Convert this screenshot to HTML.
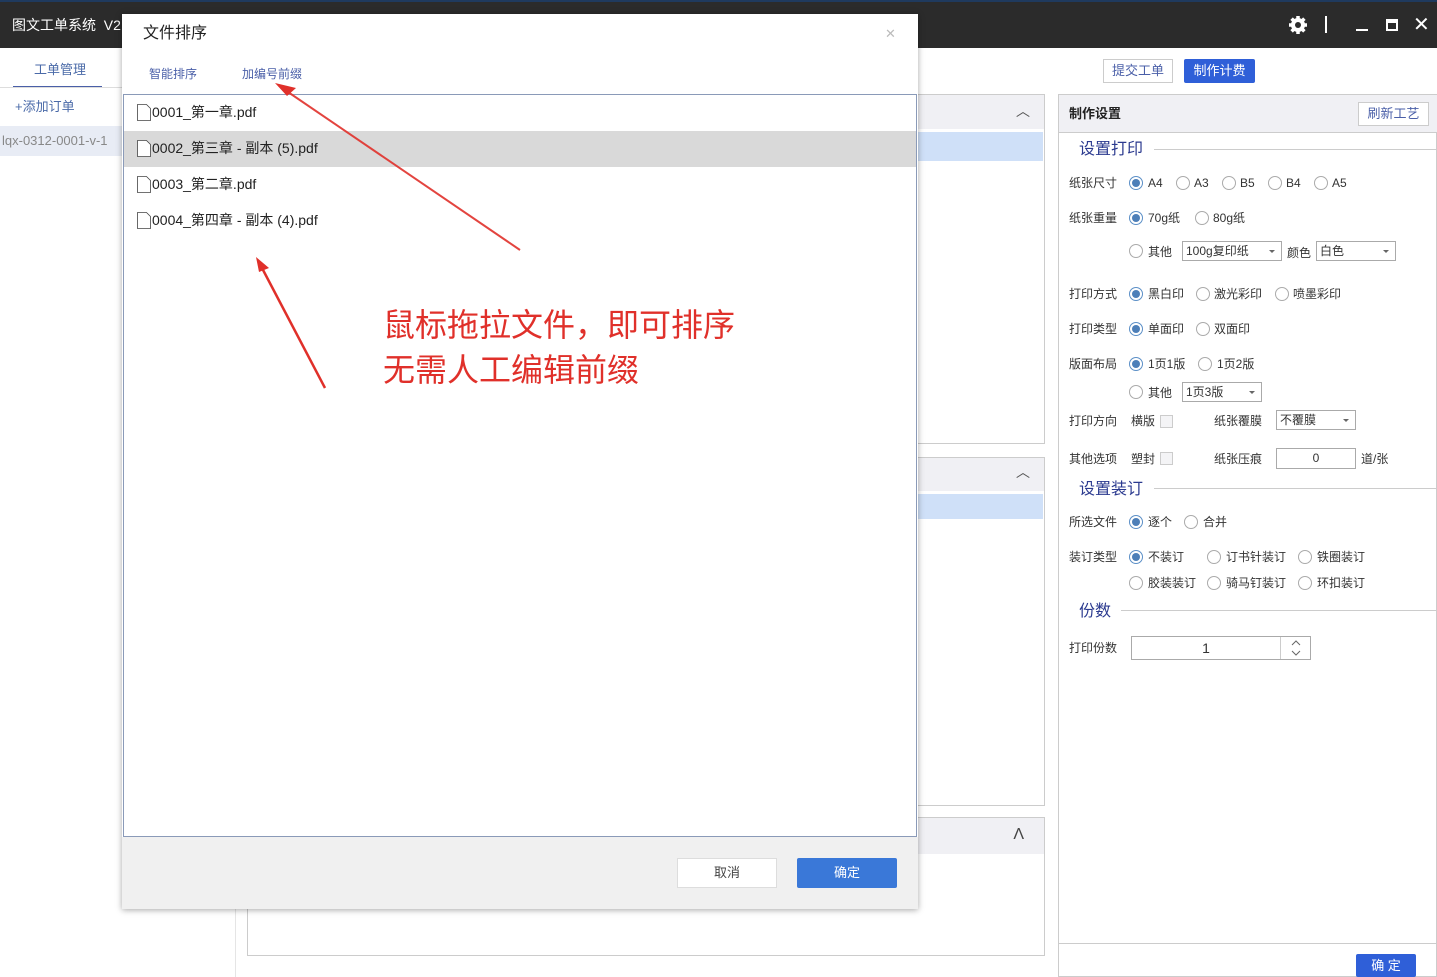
<!DOCTYPE html>
<html><head><meta charset="utf-8"><style>
*{margin:0;padding:0;box-sizing:border-box}
body{width:1437px;height:977px;position:relative;overflow:hidden;background:#fff;font-family:"Liberation Sans","Noto Sans CJK SC",sans-serif;color:#333;font-size:12px}
.a{position:absolute}
.r{position:absolute;width:14px;height:14px;border:1px solid #aaa;border-radius:50%;background:#fff}
.r.on{border-color:#5b8fc7}
.r.on::after{content:"";position:absolute;left:2px;top:2px;width:8px;height:8px;border-radius:50%;background:#4d7fb8}
.t{position:absolute;font-size:12px;line-height:14px;color:#333;white-space:nowrap}
.sel{position:absolute;height:20px;border:1px solid #aaa;background:#fff;font-size:12px;padding-left:3px;line-height:18px}
.sel::after{content:"";position:absolute;right:6px;top:8px;border:3px solid transparent;border-top:3px solid #666}
.cb{position:absolute;width:13px;height:13px;border:1px solid #ccc;background:#f4f4f6}
.sec{position:absolute;font-size:16px;line-height:18px;color:#2b3a8f}
.line{position:absolute;height:1px;background:#ccc}
</style></head><body>
<!-- title bar -->
<div class="a" style="left:0;top:0;width:1437px;height:48px;background:#2b2b2b;border-top:2px solid #1f3a5e"></div>
<div class="t" style="left:12px;top:17px;color:#fff;font-size:14px;line-height:16px">图文工单系统&nbsp; V2</div>
<svg class="a" style="left:1288px;top:15px" width="20" height="20" viewBox="0 0 20 20"><circle cx="10" cy="10" r="7" fill="#fff"/><g stroke="#fff" stroke-width="3.5"><line x1="10" y1="1" x2="10" y2="19"/><line x1="1" y1="10" x2="19" y2="10"/><line x1="3.6" y1="3.6" x2="16.4" y2="16.4"/><line x1="16.4" y1="3.6" x2="3.6" y2="16.4"/></g><circle cx="10" cy="10" r="3" fill="#2b2b2b"/></svg>
<div class="a" style="left:1325px;top:16px;width:2px;height:17px;background:#fff"></div>
<div class="a" style="left:1356px;top:29px;width:12px;height:2px;background:#fff"></div>
<div class="a" style="left:1386px;top:19px;width:12px;height:12px;border:2px solid #fff;border-top-width:4px"></div>
<div class="t" style="left:1413px;top:15px;color:#fff;font-size:20px;line-height:20px">✕</div>
<!-- left sidebar -->
<div class="t" style="left:34px;top:62px;color:#4a6aa8;font-size:13px;line-height:15px">工单管理</div>
<div class="a" style="left:13px;top:86px;width:89px;height:2px;background:#4a5fa8"></div>
<div class="a" style="left:0;top:87px;width:122px;height:1px;background:#ddd"></div>
<div class="t" style="left:15px;top:99px;color:#4a6aa8;font-size:13px;line-height:15px">+添加订单</div>
<div class="a" style="left:0;top:126px;width:122px;height:30px;background:#e8ecf5"></div>
<div class="t" style="left:2px;top:133px;color:#888;font-size:13px;line-height:15px">lqx-0312-0001-v-1</div>
<div class="a" style="left:235px;top:820px;width:1px;height:157px;background:#e5e5e5"></div>
<!-- top buttons -->
<div class="a" style="left:1103px;top:59px;width:70px;height:24px;border:1px solid #ccc;background:#fff;color:#4a5fa8;font-size:13px;text-align:center;line-height:22px">提交工单</div>
<div class="a" style="left:1184px;top:59px;width:71px;height:24px;background:#2f5fd8;color:#fff;font-size:13px;text-align:center;line-height:24px;border-radius:2px">制作计费</div>
<!-- middle panels -->
<div class="a" style="left:900px;top:94px;width:145px;height:350px;border:1px solid #ccc;background:#fff"><div style="height:34px;background:#f0f0f4"></div><div style="position:absolute;left:16px;top:37px;width:126px;height:29px;background:#cfe0f8"></div><div style="position:absolute;right:14px;top:6px;font-size:14px;color:#555">︿</div></div>
<div class="a" style="left:900px;top:457px;width:145px;height:349px;border:1px solid #ccc;background:#fff"><div style="height:33px;background:#f0f0f4"></div><div style="position:absolute;left:16px;top:36px;width:126px;height:25px;background:#cfe0f8"></div><div style="position:absolute;right:14px;top:4px;font-size:14px;color:#555">︿</div></div>
<div class="a" style="left:247px;top:817px;width:798px;height:139px;border:1px solid #ccc;background:#fff"><div style="height:36px;background:#f0f0f4"></div><div style="position:absolute;right:20px;top:8px;font-size:16px;color:#444">Λ</div></div>
<!-- right panel -->
<div class="a" style="left:1058px;top:94px;width:379px;height:883px;border:1px solid #ccc;background:#fff"></div>
<div class="a" style="left:1059px;top:95px;width:378px;height:38px;background:#f0f0f4;border-bottom:1px solid #ccc"></div>
<div class="t" style="left:1069px;top:106px;font-size:13px;line-height:15px;font-weight:bold;color:#222">制作设置</div>
<div class="a" style="left:1358px;top:102px;width:71px;height:24px;border:1px solid #ccc;background:#fff;color:#4a5fa8;font-size:13px;text-align:center;line-height:22px">刷新工艺</div>
<div class="sec" style="left:1079px;top:141px">设置打印</div><div class="line" style="left:1154px;top:149px;width:283px"></div>
<div class="t" style="left:1069px;top:176px">纸张尺寸</div>
<div class="r on" style="left:1129px;top:176px"></div><div class="t" style="left:1148px;top:176px">A4</div>
<div class="r" style="left:1176px;top:176px"></div><div class="t" style="left:1194px;top:176px">A3</div>
<div class="r" style="left:1222px;top:176px"></div><div class="t" style="left:1240px;top:176px">B5</div>
<div class="r" style="left:1268px;top:176px"></div><div class="t" style="left:1286px;top:176px">B4</div>
<div class="r" style="left:1314px;top:176px"></div><div class="t" style="left:1332px;top:176px">A5</div>
<div class="t" style="left:1069px;top:211px">纸张重量</div>
<div class="r on" style="left:1129px;top:211px"></div><div class="t" style="left:1148px;top:211px">70g纸</div>
<div class="r" style="left:1195px;top:211px"></div><div class="t" style="left:1213px;top:211px">80g纸</div>
<div class="r" style="left:1129px;top:244px"></div><div class="t" style="left:1148px;top:245px">其他</div>
<div class="sel" style="left:1182px;top:241px;width:100px">100g复印纸</div>
<div class="t" style="left:1287px;top:246px">颜色</div>
<div class="sel" style="left:1316px;top:241px;width:80px">白色</div>
<div class="t" style="left:1069px;top:287px">打印方式</div>
<div class="r on" style="left:1129px;top:287px"></div><div class="t" style="left:1148px;top:287px">黑白印</div>
<div class="r" style="left:1196px;top:287px"></div><div class="t" style="left:1214px;top:287px">激光彩印</div>
<div class="r" style="left:1275px;top:287px"></div><div class="t" style="left:1293px;top:287px">喷墨彩印</div>
<div class="t" style="left:1069px;top:322px">打印类型</div>
<div class="r on" style="left:1129px;top:322px"></div><div class="t" style="left:1148px;top:322px">单面印</div>
<div class="r" style="left:1196px;top:322px"></div><div class="t" style="left:1214px;top:322px">双面印</div>
<div class="t" style="left:1069px;top:357px">版面布局</div>
<div class="r on" style="left:1129px;top:357px"></div><div class="t" style="left:1148px;top:357px">1页1版</div>
<div class="r" style="left:1198px;top:357px"></div><div class="t" style="left:1217px;top:357px">1页2版</div>
<div class="r" style="left:1129px;top:385px"></div><div class="t" style="left:1148px;top:386px">其他</div>
<div class="sel" style="left:1182px;top:382px;width:80px">1页3版</div>
<div class="t" style="left:1069px;top:414px">打印方向</div><div class="t" style="left:1131px;top:414px">横版</div><div class="cb" style="left:1160px;top:415px"></div>
<div class="t" style="left:1214px;top:414px">纸张覆膜</div><div class="sel" style="left:1276px;top:410px;width:80px">不覆膜</div>
<div class="t" style="left:1069px;top:452px">其他选项</div><div class="t" style="left:1131px;top:452px">塑封</div><div class="cb" style="left:1160px;top:452px"></div>
<div class="t" style="left:1214px;top:452px">纸张压痕</div>
<div class="a" style="left:1276px;top:448px;width:80px;height:21px;border:1px solid #aaa;text-align:center;line-height:19px">0</div>
<div class="t" style="left:1361px;top:452px">道/张</div>
<div class="sec" style="left:1079px;top:481px">设置装订</div><div class="line" style="left:1154px;top:488px;width:283px"></div>
<div class="t" style="left:1069px;top:515px">所选文件</div>
<div class="r on" style="left:1129px;top:515px"></div><div class="t" style="left:1148px;top:515px">逐个</div>
<div class="r" style="left:1184px;top:515px"></div><div class="t" style="left:1203px;top:515px">合并</div>
<div class="t" style="left:1069px;top:550px">装订类型</div>
<div class="r on" style="left:1129px;top:550px"></div><div class="t" style="left:1148px;top:550px">不装订</div>
<div class="r" style="left:1207px;top:550px"></div><div class="t" style="left:1226px;top:550px">订书针装订</div>
<div class="r" style="left:1298px;top:550px"></div><div class="t" style="left:1317px;top:550px">铁圈装订</div>
<div class="r" style="left:1129px;top:576px"></div><div class="t" style="left:1148px;top:576px">胶装装订</div>
<div class="r" style="left:1207px;top:576px"></div><div class="t" style="left:1226px;top:576px">骑马钉装订</div>
<div class="r" style="left:1298px;top:576px"></div><div class="t" style="left:1317px;top:576px">环扣装订</div>
<div class="sec" style="left:1079px;top:603px">份数</div><div class="line" style="left:1121px;top:610px;width:316px"></div>
<div class="t" style="left:1069px;top:641px">打印份数</div>
<div class="a" style="left:1131px;top:636px;width:180px;height:24px;border:1px solid #aaa;font-size:14px;text-align:center;line-height:22px;padding-right:30px">1</div>
<div class="a" style="left:1280px;top:637px;width:1px;height:22px;background:#ccc"></div>
<svg class="a" style="left:1289px;top:638px" width="14" height="20"><path d="M3 7l4-4 4 4M3 13l4 4 4-4" stroke="#666" fill="none"/></svg>
<div class="a" style="left:1059px;top:943px;width:378px;height:1px;background:#ccc"></div>
<div class="a" style="left:1356px;top:954px;width:60px;height:23px;background:#2f5fd8;color:#fff;font-size:13px;text-align:center;line-height:23px;border-radius:2px">确 定</div>
<!-- modal -->
<div class="a" style="left:122px;top:14px;width:796px;height:895px;background:#fff;box-shadow:0 1px 6px rgba(0,0,0,.35)"></div>
<div class="t" style="left:143px;top:25px;font-size:16px;line-height:18px;color:#222">文件排序</div>
<div class="t" style="left:885px;top:27px;font-size:13px;color:#bbb">✕</div>
<div class="t" style="left:149px;top:67px;color:#4a5fa8">智能排序</div>
<div class="t" style="left:242px;top:67px;color:#4a5fa8">加编号前缀</div>
<div class="a" style="left:123px;top:94px;width:794px;height:743px;border:1px solid #8a9ab8;background:#fff"></div>
<div class="a" style="left:124px;top:131px;width:792px;height:36px;background:#d9d9d9"></div>
<div class="a" style="left:122px;top:837px;width:796px;height:72px;background:#f0f0f0"></div>
<div class="a" style="left:677px;top:858px;width:100px;height:30px;background:#fff;border:1px solid #ddd;text-align:center;line-height:28px;font-size:13px;color:#444">取消</div>
<div class="a" style="left:797px;top:858px;width:100px;height:30px;background:#3a78d8;border-radius:2px;text-align:center;line-height:30px;font-size:13px;color:#fff">确定</div>
<svg class="a" style="left:0;top:0" width="1437" height="977">
<g fill="#fff" stroke="#444" stroke-width="0.8"><path d="M137.5 104.5h9l4 4v12h-13z"/><path d="M137.5 140.5h9l4 4v12h-13z"/><path d="M137.5 176.5h9l4 4v12h-13z"/><path d="M137.5 212.5h9l4 4v12h-13z"/></g>
<path d="M520 250 L288 92" stroke="#e0302a" stroke-width="2" fill="none" opacity=".9"/>
<path d="M275 83 L296 88 L287 96z" fill="#e0302a"/>
<path d="M325 388 L262 268" stroke="#e0302a" stroke-width="2.5" fill="none"/>
<path d="M256 257 L269 268 L259 272z" fill="#e0302a"/>
</svg>
<div class="t" style="left:152px;top:104px;font-size:14px;line-height:16px;color:#222">0001_第一章.pdf</div>
<div class="t" style="left:152px;top:140px;font-size:14px;line-height:16px;color:#222">0002_第三章 - 副本 (5).pdf</div>
<div class="t" style="left:152px;top:176px;font-size:14px;line-height:16px;color:#222">0003_第二章.pdf</div>
<div class="t" style="left:152px;top:212px;font-size:14px;line-height:16px;color:#222">0004_第四章 - 副本 (4).pdf</div>
<div class="t" style="left:383px;top:303px;font-size:32px;line-height:45px;color:#e0302a">鼠标拖拉文件，即可排序<br>无需人工编辑前缀</div>
</body></html>
